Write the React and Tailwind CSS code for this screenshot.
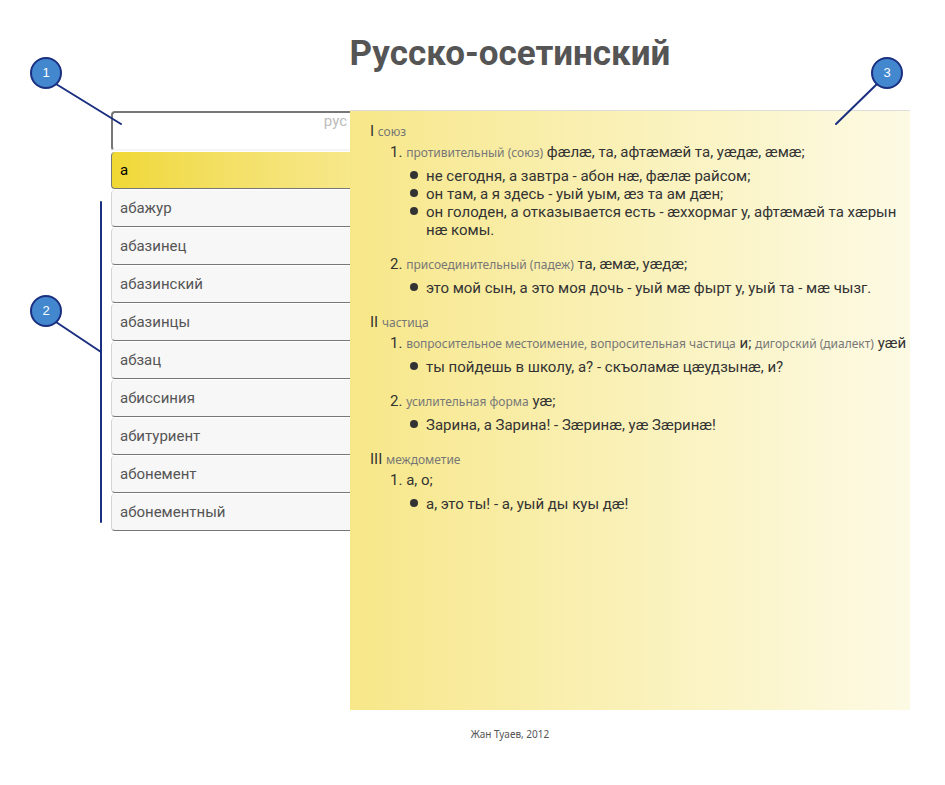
const words = [
  'а',
  'абажур',
  'абазинец',
  'абазинский',
  'абазинцы',
  'абзац',
  'абиссиния',
  'абитуриент',
  'абонемент',
  'абонементный',
];

const article = [
  {
    numeral: 'I',
    part: 'союз',
    meanings: [
      {
        parts: [
          { note: 'противительный (союз)' },
          { text: 'фæлæ, та, афтæмæй та, уæдæ, æмæ;' },
        ],
        examples: [
          'не сегодня, а завтра - абон нæ, фæлæ райсом;',
          'он там, а я здесь - уый уым, æз та ам дæн;',
          'он голоден, а отказывается есть - æххормаг у, афтæмæй та хæрын нæ комы.',
        ],
      },
      {
        parts: [
          { note: 'присоединительный (падеж)' },
          { text: 'та, æмæ, уæдæ;' },
        ],
        examples: ['это мой сын, а это моя дочь - уый мæ фырт у, уый та - мæ чызг.'],
      },
    ],
  },
  {
    numeral: 'II',
    part: 'частица',
    meanings: [
      {
        parts: [
          { note: 'вопросительное местоимение, вопросительная частица' },
          { text: 'и;' },
          { note: 'дигорский (диалект)' },
          { text: 'уæй' },
        ],
        examples: ['ты пойдешь в школу, а? - скъоламæ цæудзынæ, и?'],
      },
      {
        parts: [{ note: 'усилительная форма' }, { text: 'уæ;' }],
        examples: ['Зарина, а Зарина! - Зæринæ, уæ Зæринæ!'],
      },
    ],
  },
  {
    numeral: 'III',
    part: 'междометие',
    meanings: [
      {
        parts: [{ text: 'а, о;' }],
        examples: ['а, это ты! - а, уый ды куы дæ!'],
      },
    ],
  },
];

function Note({ children }) {
  return (
    <span className="font-['Noto_Sans',sans-serif] text-xs leading-none text-[#777]">{children}</span>
  );
}

function WordItem({ word, active }) {
  const tone = active
    ? 'border-l-[#777] bg-linear-to-r from-[#f0d833] to-[#f7e88a] text-black'
    : 'border-l-[#d4d4d4] bg-[#f7f7f7] text-[#555]';
  return (
    <li>
      <button
        type="button"
        className={`block h-[37px] w-full rounded-l border-b border-l border-b-[#777] pl-2 text-left ${tone}`}
      >
        {word}
      </button>
    </li>
  );
}

function Meaning({ index, parts, examples }) {
  return (
    <li>
      <p className="pl-5 leading-[21px] whitespace-nowrap">
        {index}.{' '}
        {parts.map((part, i) => (
          <span key={i}>{part.note ? <Note>{part.note}</Note> : part.text} </span>
        ))}
      </p>
      <ul className="mt-1 mb-[15px] pr-3 pl-10">
        {examples.map((example) => (
          <li key={example} className="flex gap-2 leading-[18px]">
            <span className="mt-1 size-2 shrink-0 rounded-full bg-[#333]" />
            <span>{example}</span>
          </li>
        ))}
      </ul>
    </li>
  );
}

function Marker({ label, place }) {
  return (
    <span
      className={`absolute flex size-8 items-center justify-center rounded-full border-2 border-[#1a2f80] bg-[#4388cf] font-['Liberation_Sans',sans-serif] text-[13px] text-white ${place}`}
    >
      {label}
    </span>
  );
}

export default function App() {
  return (
    <div className="relative bg-white pr-[35px] pl-[110px] font-['Roboto',sans-serif] text-[15px] text-[#333]">
      <header className="flex h-[110px] items-center justify-center pb-0.5">
        <h1 className="text-[35px] font-bold text-[#555]">Русско-осетинский</h1>
      </header>

      <main className="flex">
        <section className="w-60 shrink-0 pt-px pl-px" aria-label="Словарь">
          <div className="relative">
            <input
              type="text"
              aria-label="Поиск слова"
              className="block h-10 w-full rounded-l border-t-2 border-b-2 border-l-2 border-t-[#777] border-b-[#f5f5f5] border-l-[#777] bg-white px-2 outline-none"
            />
            <button type="button" className="absolute top-0 right-[3px] leading-5 text-[#bbb]">
              рус
            </button>
          </div>
          <ul className="mt-px flex flex-col gap-px">
            {words.map((word, i) => (
              <WordItem key={word} word={word} active={i === 0} />
            ))}
          </ul>
        </section>

        <article className="min-h-[600px] min-w-0 flex-1 overflow-hidden border-t border-[#ddd] bg-linear-to-r from-[#f7e788] to-[#fdfae4] pt-[10px] pl-5">
          {article.map((section) => (
            <section key={section.numeral}>
              <h2 className="leading-[21px]">
                {section.numeral} <Note>{section.part}</Note>
              </h2>
              <ol>
                {section.meanings.map((meaning, i) => (
                  <Meaning key={i} index={i + 1} {...meaning} />
                ))}
              </ol>
            </section>
          ))}
        </article>
      </main>

      <footer className="pt-4 text-center font-['Noto_Sans',sans-serif] text-[10px] leading-4 text-[#555]">
        Жан Туаев, 2012
      </footer>

      <svg
        className="pointer-events-none absolute top-0 left-0"
        width="130"
        height="530"
        fill="none"
        stroke="#1a2f80"
        strokeWidth="2"
        strokeLinecap="round"
      >
        <path d="M56 84 L121 124" />
        <path d="M56 322 L101 352" />
        <path d="M101 202 V522" />
      </svg>
      <svg
        className="pointer-events-none absolute top-[80px] right-[65px]"
        width="50"
        height="50"
        fill="none"
        stroke="#1a2f80"
        strokeWidth="2"
        strokeLinecap="round"
      >
        <path d="M47 4 L6 44" />
      </svg>
      <Marker label="1" place="top-[57px] left-[30px]" />
      <Marker label="2" place="top-[295px] left-[30px]" />
      <Marker label="3" place="top-[57px] right-[42px]" />
    </div>
  );
}
